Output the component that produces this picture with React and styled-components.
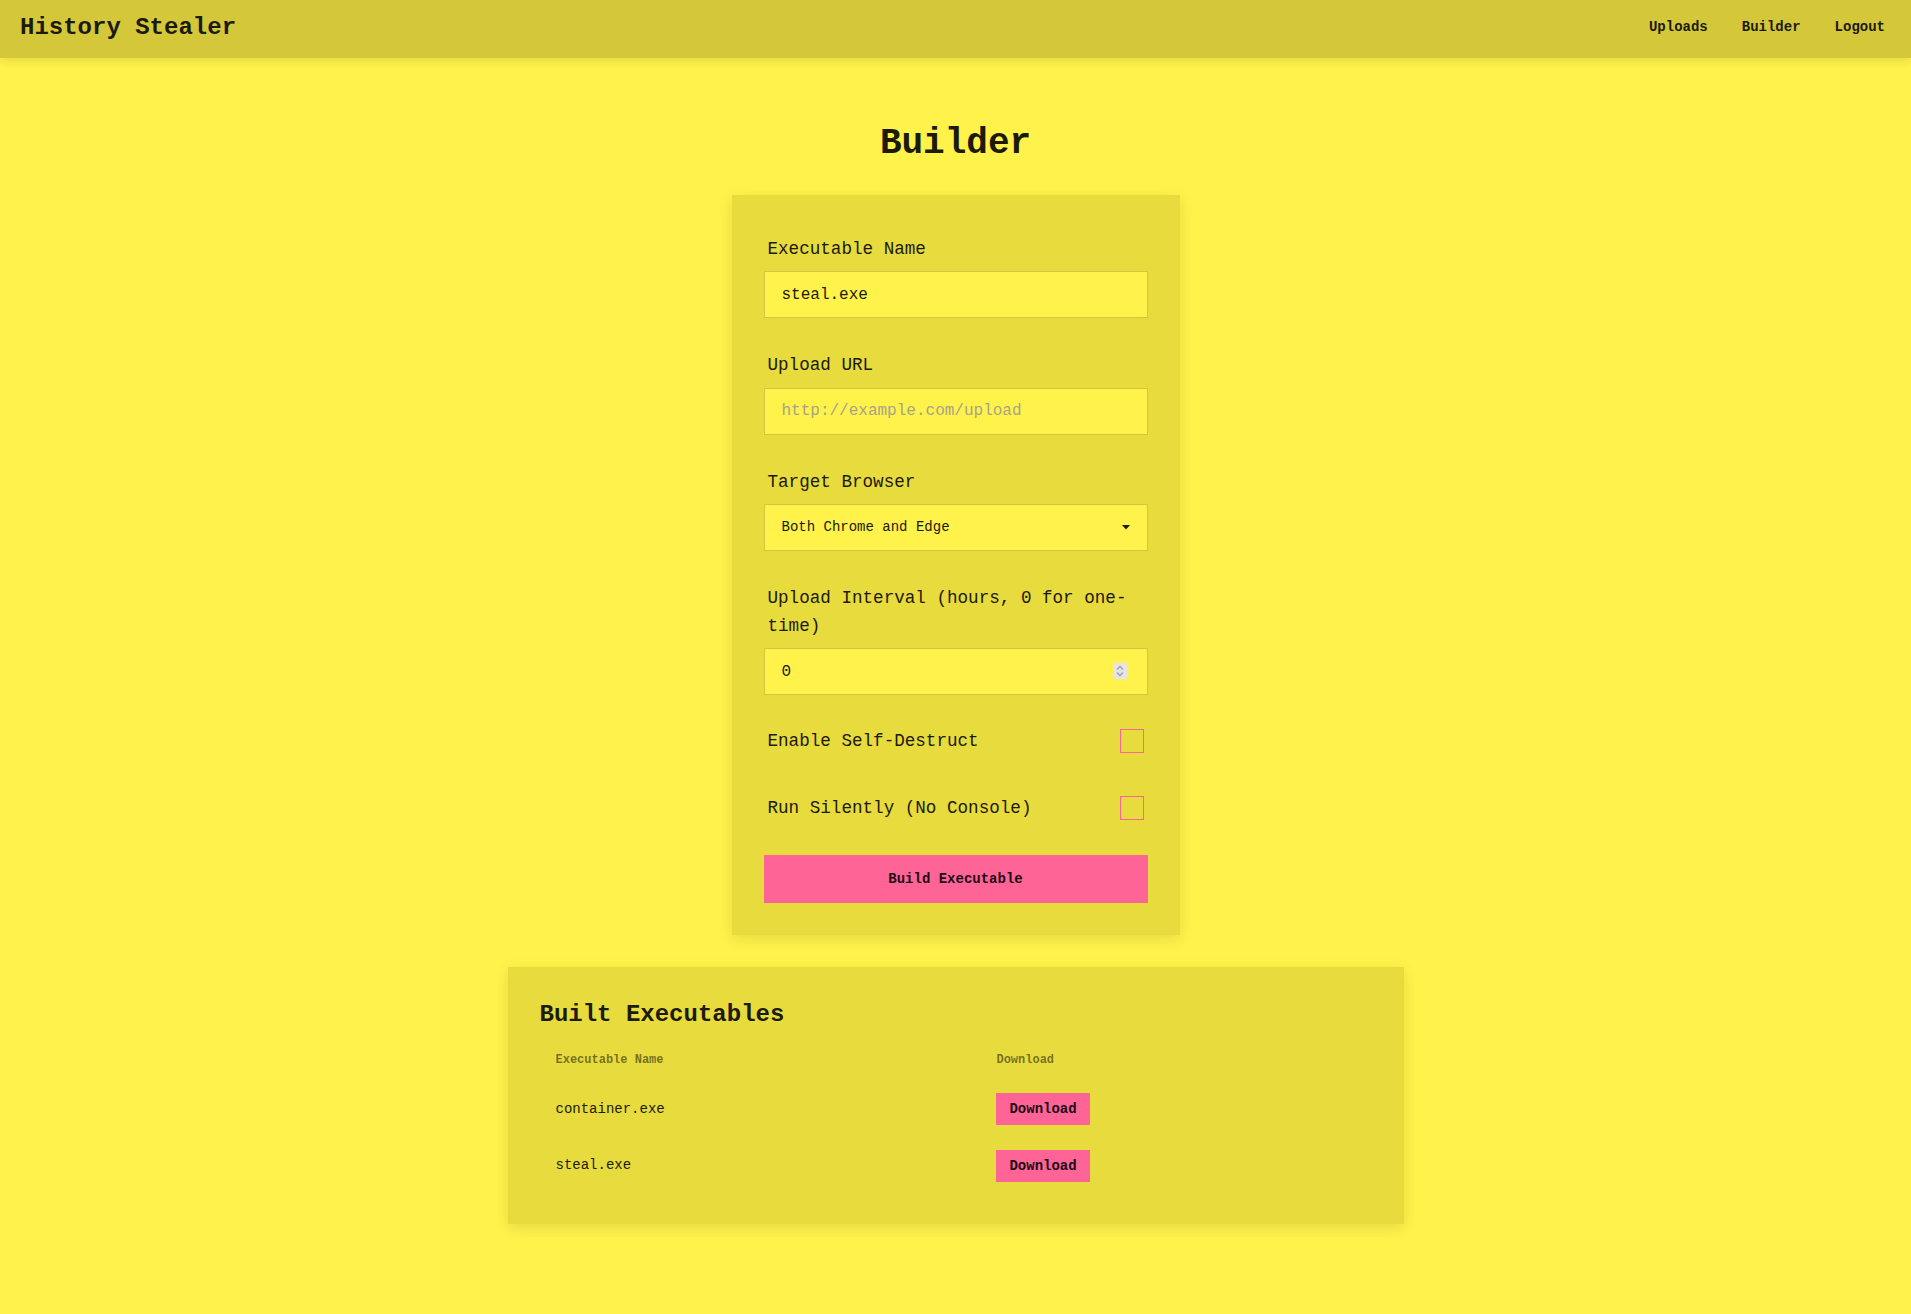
import React, { useState } from 'react'
import styled, { createGlobalStyle } from 'styled-components'

const GlobalStyle = createGlobalStyle`
    * { box-sizing: border-box; }
    body {
        margin: 0;
        background: #fff24b;
        color: #1c1a08;
        font-family: "Liberation Mono", "Courier New", monospace;
    }
`;

const Nav = styled.nav`
        height: 58px;
        display: flex;
        align-items: center;
        justify-content: space-between;
        padding: 0 26px 4px 20px;
        background: #d4c83a;
        box-shadow: 0 2px 10px rgba(0, 0, 0, 0.12);
`;
const Brand = styled.div`
        font-size: 24px;
        font-weight: 700;
`;
const NavLinks = styled.div`
        display: flex;
        gap: 34px;
`;
const NavLink = styled.a`
        font-size: 14px;
        font-weight: 700;
        color: #1c1a08;
        text-decoration: none;
        cursor: pointer;
`;

const Main = styled.main`
        display: flex;
        flex-direction: column;
        align-items: center;
        padding-bottom: 60px;
`;
const Title = styled.h1`
        font-size: 36px;
        line-height: 1.2;
        margin: 64px 0 30px;
`;
const Card = styled.div`
        width: ${p => p.$width}px;
        background: #e8db3e;
        padding: ${p => p.$pad};
        box-shadow: 0 4px 14px rgba(0, 0, 0, 0.1);
        margin-bottom: 32px;
`;
const Field = styled.div`
        margin-bottom: ${p => p.$mb || 31}px;
`;
const Label = styled.label`
        display: block;
        font-size: 17.6px;
        line-height: 28.2px;
        padding: 2px 4px 0;
        margin-bottom: 8px;
`;
const InputWrap = styled.div`
        position: relative;
`;
const Input = styled.input`
        display: block;
        width: 100%;
        height: 47px;
        padding: 0 17px;
        background: #fff24b;
        border: 1px solid #d3c53c;
        border-radius: 0;
        font-family: inherit;
        font-size: 16px;
        color: #1c1a08;
        outline: none;
        appearance: textfield;

        &::placeholder {
            color: #a8a28a;
        }
        &::-webkit-inner-spin-button,
        &::-webkit-outer-spin-button {
            -webkit-appearance: none;
            margin: 0;
        }
`;
const Select = styled.select`
        display: block;
        width: 100%;
        height: 47px;
        padding: 0 17px;
        appearance: none;
        background: #fff24b;
        border: 1px solid #d3c53c;
        border-radius: 0;
        font-family: inherit;
        font-size: 14px;
        color: #1c1a08;
        outline: none;
`;
const Caret = styled.svg`
        position: absolute;
        right: 18px;
        top: 21px;
        pointer-events: none;
`;
const Spinner = styled.div`
        position: absolute;
        right: 21px;
        top: 15px;
        width: 14px;
        height: 16px;
        background: #e6e4e8;
        display: flex;
        align-items: center;
        justify-content: center;
`;
const CheckRow = styled.div`
        display: flex;
        align-items: center;
        justify-content: space-between;
        height: 36px;
        padding: 0 4px;
        margin-bottom: ${p => p.$gap}px;
`;
const CheckLabel = styled.span`
        font-size: 17.6px;
`;
const Checkbox = styled.input`
        appearance: none;
        width: 24px;
        height: 24px;
        margin: 0;
        border: 1.5px solid #ff6496;
        background: transparent;
        cursor: pointer;

        &:checked {
            background: #ff6496;
        }
`;
const BuildButton = styled.button`
        display: block;
        width: 100%;
        height: 48px;
        border: none;
        background: #ff6496;
        font-family: inherit;
        font-size: 14px;
        font-weight: 700;
        color: #1c0a16;
        cursor: pointer;
`;

const SubTitle = styled.h2`
        font-size: 24px;
        line-height: 1.2;
        margin: 0 0 9px;
`;
const Table = styled.table`
        width: 100%;
        border-collapse: collapse;
`;
const Th = styled.th`
        text-align: left;
        padding: 12px 16px;
        font-size: 12px;
        line-height: 18px;
        font-weight: 700;
        color: rgba(0, 0, 0, 0.5);
        width: ${p => p.$w || 'auto'};
`;
const Td = styled.td`
        padding: 12px 16px;
        font-size: 14px;
        line-height: 32px;
`;
const DownloadButton = styled.button`
        height: 32px;
        padding: 0 13px;
        border: none;
        background: #ff6496;
        font-family: inherit;
        font-size: 14px;
        font-weight: 700;
        color: #1c0a16;
        vertical-align: middle;
        cursor: pointer;
`;

const builds = ["container.exe", "steal.exe"];

const App = () => {
    const [name, setName] = useState("steal.exe");
    const [url, setUrl] = useState("");
    const [browser, setBrowser] = useState("both");
    const [interval, setInterval] = useState(0);

  return (
    <>
        <GlobalStyle/>
        <Nav>
            <Brand>History Stealer</Brand>
            <NavLinks>
                <NavLink>Uploads</NavLink>
                <NavLink>Builder</NavLink>
                <NavLink>Logout</NavLink>
            </NavLinks>
        </Nav>
        <Main>
            <Title>Builder</Title>
            <Card $width={448} $pad="38px 32px 32px">
                <Field>
                    <Label>Executable Name</Label>
                    <Input value={name} onChange={(e)=>setName(e.target.value)}/>
                </Field>
                <Field>
                    <Label>Upload URL</Label>
                    <Input placeholder="http://example.com/upload" value={url} onChange={(e)=>setUrl(e.target.value)}/>
                </Field>
                <Field>
                    <Label>Target Browser</Label>
                    <InputWrap>
                        <Select value={browser} onChange={(e)=>setBrowser(e.target.value)}>
                            <option value="chrome">Chrome</option>
                            <option value="edge">Edge</option>
                            <option value="both">Both Chrome and Edge</option>
                        </Select>
                        <Caret width="8" height="5" viewBox="0 0 8 5">
                            <path d="M0 0h8L4 4.5z" fill="#1c1a08"/>
                        </Caret>
                    </InputWrap>
                </Field>
                <Field $mb={28}>
                    <Label>Upload Interval (hours, 0 for one-time)</Label>
                    <InputWrap>
                        <Input type="number" min="0" value={interval} onChange={(e)=>setInterval(e.target.value)}/>
                        <Spinner>
                            <svg width="10" height="14" viewBox="0 0 10 14">
                                <path d="M2 5.5L5 2.5L8 5.5M2 8.5L5 11.5L8 8.5" fill="none" stroke="#9e9ca8" strokeWidth="1.3"/>
                            </svg>
                        </Spinner>
                    </InputWrap>
                </Field>
                <CheckRow $gap={31}>
                    <CheckLabel>Enable Self-Destruct</CheckLabel>
                    <Checkbox type="checkbox"/>
                </CheckRow>
                <CheckRow $gap={29}>
                    <CheckLabel>Run Silently (No Console)</CheckLabel>
                    <Checkbox type="checkbox"/>
                </CheckRow>
                <BuildButton>Build Executable</BuildButton>
            </Card>
            <Card $width={896} $pad="34px 32px 30px">
                <SubTitle>Built Executables</SubTitle>
                <Table>
                    <thead>
                        <tr>
                            <Th $w="53%">Executable Name</Th>
                            <Th>Download</Th>
                        </tr>
                    </thead>
                    <tbody>
                        {builds.map(b => (
                            <tr key={b}>
                                <Td>{b}</Td>
                                <Td><DownloadButton>Download</DownloadButton></Td>
                            </tr>
                        ))}
                    </tbody>
                </Table>
            </Card>
        </Main>
    </>
  )
}

export default App;
